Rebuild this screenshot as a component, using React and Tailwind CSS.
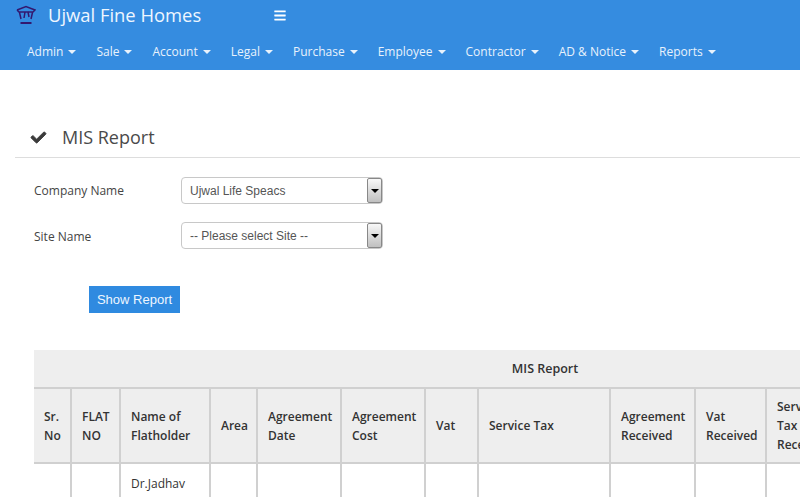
import { FaBars, FaCheck } from "react-icons/fa";

const menu = ["Admin", "Sale", "Account", "Legal", "Purchase", "Employee", "Contractor", "AD & Notice", "Reports"];

const columns = [
  { label: "Sr. No", width: "w-[37px]" },
  { label: "FLAT NO", width: "w-[49px]" },
  { label: "Name of Flatholder", width: "w-[90px]" },
  { label: "Area", width: "w-[47px]" },
  { label: "Agreement Date", width: "w-[84px]" },
  { label: "Agreement Cost", width: "w-[84px]" },
  { label: "Vat", width: "w-[53px]" },
  { label: "Service Tax", width: "w-[132px]" },
  { label: "Agreement Received", width: "w-[85px]" },
  { label: "Vat Received", width: "w-[71px]" },
  { label: "Service Tax Received", width: "w-[84px]" },
  { label: "Balance", width: "w-[206px]" },
];

function Logo() {
  return (
    <svg width="20" height="20" viewBox="0 0 20 20" fill="none" stroke="#33186f" strokeWidth="1.5">
      <path d="M1 5 L10 1.5 L19 5 L16.5 7.5 L15 14 M1 5 L3.5 7.5 L5 14" />
      <path d="M3.5 7 H16.5" />
      <path d="M9 7 L8 13 M12 7 L13 12" />
      <path d="M4.5 18 H15.5" strokeWidth="2" />
    </svg>
  );
}

function SelectBox({ text }) {
  return (
    <div className="flex w-[202px] h-[27px] items-stretch rounded-[4px] border border-[#c8c8c8] bg-white">
      <span className="flex-1 pl-2 leading-[26px] text-[12px] text-[#555] font-['Liberation_Sans',sans-serif]">{text}</span>
      <span className="flex w-[15px] items-center justify-center rounded-[2px] border border-[#888] bg-gradient-to-b from-[#f8f8f8] to-[#c0c0c0]">
        <span className="border-x-[4px] border-t-[4px] border-x-transparent border-t-black" />
      </span>
    </div>
  );
}

export default function App() {
  return (
    <div className="h-[497px] w-[800px] overflow-hidden bg-white font-['Open_Sans',sans-serif] text-[#444]">
      {/* Header */}
      <header className="h-[70px] bg-[#358ce0] text-white">
        <div className="flex h-[30px] items-center pl-[16px]">
          <Logo />
          <span className="ml-[12px] w-[226px] text-[18.4px] leading-none text-[#eef6ff]">Ujwal Fine Homes</span>
          <FaBars className="h-[13px] w-[12px]" />
        </div>
        <nav className="flex gap-[20px] pl-[27px] pt-[13px] text-[12px] leading-[18px] text-[#e8f2fc]">
          {menu.map((item) => (
            <span key={item} className="flex items-center">
              {item}
              <span className="ml-[5px] border-x-[4px] border-t-[4px] border-x-transparent border-t-[#e8f2fc]" />
            </span>
          ))}
        </nav>
      </header>

      {/* Page title */}
      <div className="ml-[15px] mt-[53px] flex h-[35px] items-start border-b border-[#ddd] pl-[15px]">
        <FaCheck className="mt-[7px] h-[15px] w-[17px] text-[#3a3a3a]" stroke="currentColor" strokeWidth="30" />
        <h1 className="ml-[15px] text-[18px] leading-[28px] text-[#4a4a4a]">MIS Report</h1>
      </div>

      {/* Filters */}
      <div className="ml-[34px] mt-[19px] flex flex-col gap-[18px] text-[12px]">
        <div className="flex items-center">
          <label className="w-[147px] pt-[1px]">Company Name</label>
          <SelectBox text="Ujwal Life Speacs" />
        </div>
        <div className="flex items-center">
          <label className="w-[147px] pt-[2px]">Site Name</label>
          <SelectBox text="-- Please select Site --" />
        </div>
      </div>

      <button className="ml-[89px] mt-[37px] block h-[27px] w-[91px] bg-[#2f8ae0] text-[13px] text-[#eef6ff] font-['Liberation_Sans',sans-serif]">
        Show Report
      </button>

      {/* Report table */}
      <table className="ml-[34px] mt-[37px] w-[1022px] table-fixed border-collapse text-[12px] font-semibold text-[#333]">
        <colgroup>
          {columns.map((col) => (
            <col key={col.label} className={col.width} />
          ))}
        </colgroup>
        <thead>
          <tr className="h-[38px] bg-[#eeeeee]">
            <th colSpan={columns.length} className="border-b-2 border-[#d0d0d0] pt-[2px] text-center text-[12.5px] font-semibold">
              MIS Report
            </th>
          </tr>
          <tr className="h-[75px] bg-[#eeeeee]">
            {columns.map((col) => (
              <th key={col.label} className="border-x-2 border-b-2 border-[#d0d0d0] px-[10px] text-left align-middle font-semibold leading-[19px] first:border-l-0">
                {col.label}
              </th>
            ))}
          </tr>
        </thead>
        <tbody className="font-normal">
          <tr>
            {columns.map((col) => (
              <td key={col.label} className="border-x-2 border-[#d0d0d0] px-[10px] pt-[10px] align-top leading-[19px] first:border-l-0">
                {col.label === "Name of Flatholder" ? "Dr.Jadhav Sunil" : ""}
              </td>
            ))}
          </tr>
        </tbody>
      </table>
    </div>
  );
}
